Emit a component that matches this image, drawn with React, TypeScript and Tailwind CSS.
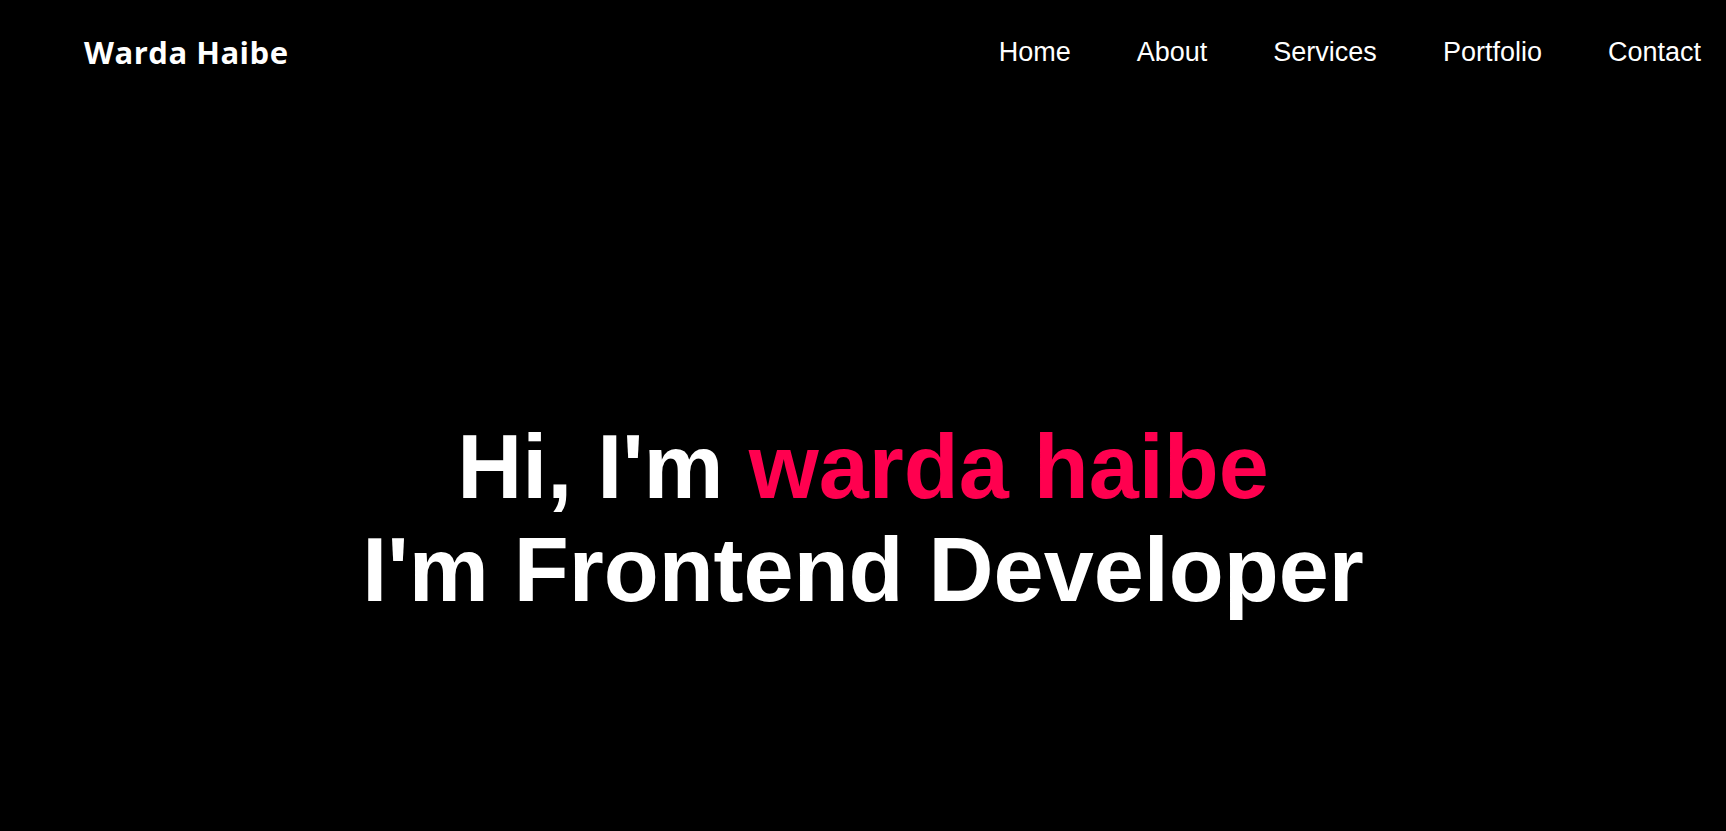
const navLinks = ["Home", "About", "Services", "Portfolio", "Contact"];

export default function App() {
  return (
    <div className="min-h-screen w-full bg-black text-white font-['Liberation_Sans',Arial,sans-serif]">
      {/* Header */}
      <header className="h-[104px] flex items-center justify-between pl-[84px] pr-[25px]">
        <div className="text-[31px] font-bold tracking-[0.5px] font-['Open_Sans','Noto_Sans',sans-serif] leading-none">
          Warda Haibe
        </div>
        <nav className="flex items-center gap-[66px] text-[27px]">
          {navLinks.map((item) => (
            <a key={item} href="#" className="text-white">
              {item}
            </a>
          ))}
        </nav>
      </header>

      {/* Hero */}
      <section className="h-screen flex items-center justify-center pb-[2px]">
        <h1 className="text-center text-[90px] font-bold leading-[103px]">
          Hi, I'm <span className="text-[#ff004f]">warda haibe</span>
          <br />
          I'm Frontend Developer
        </h1>
      </section>
    </div>
  );
}
